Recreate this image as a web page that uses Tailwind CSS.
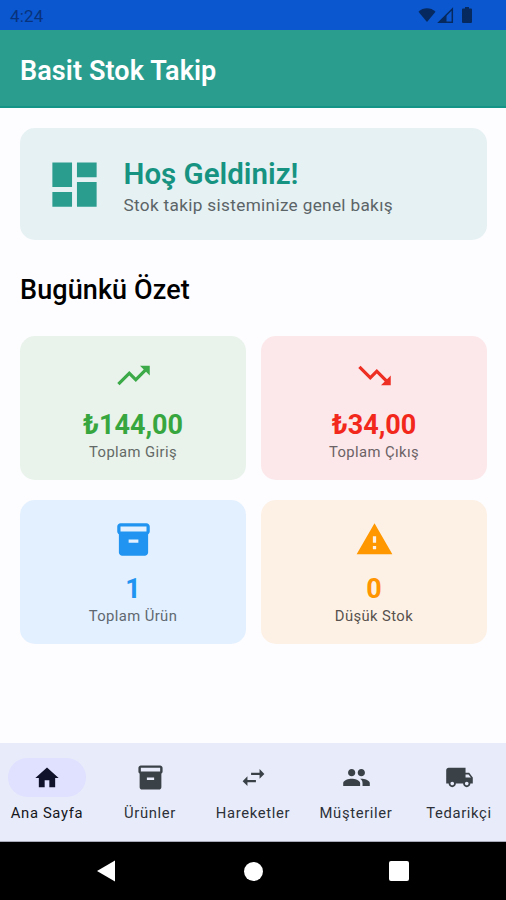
<!DOCTYPE html>
<html lang="tr">
<head>
  <meta charset="UTF-8" />
  <meta name="viewport" content="width=device-width, initial-scale=1.0" />
  <title>Basit Stok Takip</title>
  <script src="https://cdn.jsdelivr.net/npm/@tailwindcss/browser@4"></script>
</head>
<body class="bg-[#fdfcff] font-['Roboto',sans-serif]">
  <div class="w-[506px] h-[900px] flex flex-col overflow-hidden">
    <!-- Status bar -->
    <div class="h-[30px] shrink-0 bg-[#0b57d0] text-[#08337c] flex items-center justify-between pl-[10px] pr-[34px]">
      <span class="text-[17px] leading-none tracking-[0.2px] pt-[2px]">4:24</span>
      <div class="flex items-center text-[#062a5f]">
        <svg class="w-[18px] h-[16px]" viewBox="0 0 19 16" fill="currentColor"><path d="M0.5 4.5C5.5-.3 13.500-.3 18.500 4.500L9.500 15.500z" /></svg>
        <svg class="w-[17px] h-[17px] ml-[1px]" viewBox="0 0 17 17"><path d="M15.300 2V15.300H2z" fill="none" stroke="currentColor" stroke-width="1.500" /><path d="M1 16L9.500 7.500V16z" fill="currentColor" /></svg>
        <svg class="w-[10px] h-[16px] ml-[8px]" viewBox="0 0 10 16" fill="currentColor"><path d="M3 0h4v1.500h2q1 0 1 1V15q0 1-1 1H1q-1 0-1-1V2.500q0-1 1-1h2z" /></svg>
      </div>
    </div>

    <!-- App bar -->
    <header class="h-[78px] shrink-0 bg-[#2a9d8f] border-b-2 border-[#149487] flex items-center px-[20px] pt-[6px]">
      <h1 class="text-[27px] leading-[34px] font-semibold tracking-[0.1px] text-white">Basit Stok Takip</h1>
    </header>

    <!-- Content -->
    <main class="flex-1 px-[20px] pt-[20px] pr-[19px]">
      <section class="h-[112px] rounded-[15px] bg-[#e6f1f3] flex items-center pl-[25px]">
        <svg class="w-[59px] h-[59px] text-[#2a9d8f]" viewBox="0 0 24 24" fill="currentColor"><path d="M3 13h8V3H3v10zm0 8h8v-6H3v6zm10 0h8V11h-8v10zm0-18v6h8V3h-8z" /></svg>
        <div class="ml-[19.5px] pt-[5px]">
          <h2 class="text-[29.500px] leading-[38px] font-semibold text-[#179382]">Hoş Geldiniz!</h2>
          <p class="text-[17.200px] leading-[25px] tracking-[0.33px] text-[#5b6467]">Stok takip sisteminize genel bakış</p>
        </div>
      </section>

      <h2 class="mt-[33px] text-[27px] leading-[34px] font-medium tracking-[0.1px] text-black">Bugünkü Özet</h2>

      <div class="mt-[29px] grid grid-cols-2 gap-x-[15px] gap-y-[20px] text-center">
        <div class="h-[144px] rounded-[15px] bg-[#e9f3eb] pt-[20px] flex flex-col items-center">
          <svg class="w-[39px] h-[39px] text-[#3caa48]" viewBox="0 0 24 24" fill="currentColor"><path d="M16 6l2.290 2.290-4.880 4.880-4-4L2 16.590 3.410 18l6-6 4 4 6.300-6.290L22 12V6z" /></svg>
          <p class="mt-[13px] text-[27px] leading-[34px] font-bold text-[#37a63f]">₺144,00</p>
          <p class="text-[14.800px] leading-[20px] tracking-[0.400px] text-[#636966]">Toplam Giriş</p>
        </div>
        <div class="h-[144px] rounded-[15px] bg-[#fce8ea] pt-[20px] flex flex-col items-center">
          <svg class="w-[39px] h-[39px] text-[#ee2f24]" viewBox="0 0 24 24" fill="currentColor"><path d="M16 18l2.290-2.290-4.880-4.880-4 4L2 7.410 3.410 6l6 6 4-4 6.300 6.290L22 12v6z" /></svg>
          <p class="mt-[13px] text-[27px] leading-[34px] font-bold text-[#f2281c]">₺34,00</p>
          <p class="text-[14.800px] leading-[20px] tracking-[0.400px] text-[#6b6265]">Toplam Çıkış</p>
        </div>
        <div class="h-[144px] rounded-[15px] bg-[#e3f0ff] pt-[20px] flex flex-col items-center">
          <svg class="w-[39px] h-[39px] text-[#2094f0]" viewBox="0 0 24 24" fill="currentColor"><path d="M20 2H4c-1 0-2 .9-2 2v3.010c0 .72.430 1.340 1 1.690V20c0 1.100 1.100 2 2 2h14c.9 0 2-.9 2-2V8.700c.570-.350 1-.970 1-1.690V4c0-1.100-1-2-2-2zm-5 12H9v-2h6v2zm5-7H4V4h16v3z" /></svg>
          <p class="mt-[13px] text-[27px] leading-[34px] font-bold text-[#2094f0]">1</p>
          <p class="text-[14.800px] leading-[20px] tracking-[0.400px] text-[#5f6870]">Toplam Ürün</p>
        </div>
        <div class="h-[144px] rounded-[15px] bg-[#fdf1e5] pt-[20px] flex flex-col items-center">
          <svg class="w-[39px] h-[39px] text-[#ff9800]" viewBox="0 0 24 24" fill="currentColor"><path d="M1 21h22L12 2 1 21zm12-3h-2v-2h2v2zm0-4h-2v-4h2v4z" /></svg>
          <p class="mt-[13px] text-[27px] leading-[34px] font-bold text-[#ff9500]">0</p>
          <p class="text-[14.800px] leading-[20px] tracking-[0.400px] text-[#57524e]">Düşük Stok</p>
        </div>
      </div>
    </main>

    <!-- Bottom navigation -->
    <nav class="h-[99px] shrink-0 bg-[#e8ecfa] border-b border-[#a9abba] grid grid-cols-[78px_78px_78px_78px_78px] justify-between px-[8px] pt-[15px] text-[14.800px] leading-[20px] tracking-[0.650px] text-[#2c3038] whitespace-nowrap">
      <a class="flex flex-col items-center">
        <span class="w-[78px] h-[39px] rounded-full bg-[#e0e0ff] flex items-center justify-center">
          <svg class="w-[28px] h-[28px] text-[#10122b]" viewBox="0 0 24 24" fill="currentColor"><path d="M10 20v-6h4v6h5v-8h3L12 3 2 12h3v8z" /></svg>
        </span>
        <span class="mt-[6px] text-[#15161c]">Ana Sayfa</span>
      </a>
      <a class="flex flex-col items-center">
        <span class="h-[39px] flex items-center">
          <svg class="w-[29px] h-[29px] text-[#3a4147]" viewBox="0 0 24 24" fill="currentColor"><path d="M20 2H4c-1 0-2 .9-2 2v3.010c0 .72.430 1.340 1 1.690V20c0 1.100 1.100 2 2 2h14c.9 0 2-.9 2-2V8.700c.570-.350 1-.970 1-1.690V4c0-1.100-1-2-2-2zm-5 12H9v-2h6v2zm5-7H4V4h16v3z" /></svg>
        </span>
        <span class="mt-[6px]">Ürünler</span>
      </a>
      <a class="flex flex-col items-center">
        <span class="h-[39px] flex items-center">
          <svg class="w-[29px] h-[29px] text-[#3a4147]" viewBox="0 0 24 24" fill="currentColor"><path d="M6.990 11L3 15l3.990 4v-3H14v-2H6.990v-3zM21 9l-3.990-4v3H10v2h7.010v3L21 9z" /></svg>
        </span>
        <span class="mt-[6px]">Hareketler</span>
      </a>
      <a class="flex flex-col items-center">
        <span class="h-[39px] flex items-center">
          <svg class="w-[29px] h-[29px] text-[#3a4147]" viewBox="0 0 24 24" fill="currentColor"><path d="M16 11c1.660 0 2.990-1.340 2.990-3S17.660 5 16 5c-1.660 0-3 1.340-3 3s1.340 3 3 3zm-8 0c1.660 0 2.990-1.340 2.990-3S9.660 5 8 5C6.340 5 5 6.340 5 8s1.340 3 3 3zm0 2c-2.330 0-7 1.170-7 3.500V19h14v-2.500c0-2.330-4.670-3.500-7-3.500zm8 0c-.290 0-.620.020-.970.050 1.160.840 1.970 1.970 1.970 3.450V19h6v-2.500c0-2.330-4.670-3.500-7-3.500z" /></svg>
        </span>
        <span class="mt-[6px]">Müşteriler</span>
      </a>
      <a class="flex flex-col items-center">
        <span class="h-[39px] flex items-center">
          <svg class="w-[29px] h-[29px] text-[#3a4147]" viewBox="0 0 24 24" fill="currentColor"><path d="M20 8h-3V4H3c-1.100 0-2 .9-2 2v11h2c0 1.660 1.340 3 3 3s3-1.340 3-3h6c0 1.660 1.340 3 3 3s3-1.340 3-3h2v-5l-3-4zM6 18.500c-.830 0-1.500-.670-1.500-1.500s.670-1.500 1.500-1.500 1.500.670 1.500 1.500-.670 1.500-1.500 1.500zm13.500-9l1.960 2.500H17V9.500h2.500zm-1.500 9c-.830 0-1.500-.670-1.500-1.500s.670-1.500 1.500-1.500 1.500.670 1.500 1.500-.670 1.500-1.500 1.500z" /></svg>
        </span>
        <span class="mt-[6px]">Tedarikçi</span>
      </a>
    </nav>

    <!-- System buttons -->
    <div class="h-[58px] shrink-0 bg-black text-white flex items-center justify-between pl-[97px] pr-[97px]">
      <svg class="w-[18px] h-[22px]" viewBox="0 0 18 22" fill="currentColor"><path d="M18 0.500V21.500L0 11z" /></svg>
      <span class="w-[19px] h-[19px] ml-[2px] rounded-full bg-white"></span>
      <span class="w-[20px] h-[20px] rounded-[2px] bg-white"></span>
    </div>
  </div>
</body>
</html>
